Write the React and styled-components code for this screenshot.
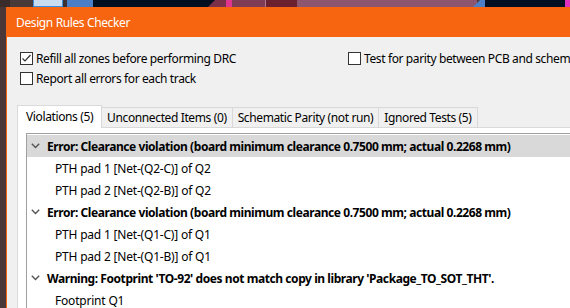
import React from "react";
import styled, { createGlobalStyle } from "styled-components";

const Global = createGlobalStyle`
  html, body { margin: 0; padding: 0; width: 570px; height: 308px; overflow: hidden; background: #4a3737; }
  * { box-sizing: border-box; }
`;

const FONT = `"Noto Sans", "Open Sans", sans-serif`;

const Screen = styled.div`
  width: 570px;
  height: 308px;
  display: flex;
  flex-direction: column;
  overflow: hidden;
  font-family: ${FONT};
  letter-spacing: -0.38px;
`;

const Strip = styled.svg`
  display: block;
  flex: none;
`;

const Lower = styled.div`
  flex: 1;
  display: flex;
  min-height: 0;
`;

const Backdrop = styled.div`
  width: 6px;
  flex: none;
  background: #4a3737;
`;

const Dialog = styled.div`
  flex: 1;
  min-width: 0;
  display: flex;
  flex-direction: column;
  border-left: 1px solid #f76510;
  background: #f0f0f0;
  overflow: hidden;
`;

const TitleBar = styled.div`
  height: 30px;
  flex: none;
  background: #f76510;
  color: #fff;
  font-size: 12px;
  display: flex;
  align-items: center;
  padding-left: 9px;
  padding-top: 1px;
`;

const Body = styled.div`
  flex: 1;
  display: flex;
  flex-direction: column;
  padding: 15px 0 0 10px;
  min-height: 0;
`;

const Options = styled.div`
  display: grid;
  grid-template-columns: 328px auto;
  row-gap: 7px;
  white-space: nowrap;
  padding-left: 3px;
`;

const Check = styled.label`
  display: flex;
  align-items: center;
  gap: 3px;
  font-size: 12px;
  color: #000;
  height: 13px;
`;

const Box = styled.span`
  width: 13px;
  height: 13px;
  flex: none;
  border: 1px solid #333;
  background: #fff;
  display: flex;
  align-items: center;
  justify-content: center;
`;

const TabsRow = styled.div`
  margin-top: 19px;
  display: flex;
  align-items: flex-end;
  height: 23px;
  position: relative;
  z-index: 1;
`;

const Tab = styled.div`
  font-size: 12px;
  white-space: nowrap;
  color: #000;
  border: 1px solid #d9d9d9;
  border-bottom: none;
  margin-left: ${(p) => (p.$first ? 0 : "-1px")};
  padding: 0 ${(p) => (p.$active ? "8px" : "5px")};
  height: ${(p) => (p.$active ? "23px" : "20px")};
  background: ${(p) => (p.$active ? "#fff" : "#f0f0f0")};
  display: flex;
  align-items: center;
  position: relative;
  z-index: ${(p) => (p.$active ? 2 : 1)};
  margin-bottom: ${(p) => (p.$active ? "-1px" : "0")};
  padding-bottom: ${(p) => (p.$active ? "2px" : "0")};
`;

const Panel = styled.div`
  flex: 1;
  background: #fff;
  border-top: 1px solid #d9d9d9;
  border-left: 1px solid #d9d9d9;
  padding: 5px 0 0 8px;
  min-height: 0;
  display: flex;
`;

const Tree = styled.div`
  flex: 1;
  border-top: 1px solid #a0a0a0;
  border-left: 1px solid #a0a0a0;
  padding-top: 1px;
  min-height: 0;
`;

const Row = styled.div`
  height: 22px;
  display: flex;
  align-items: center;
  white-space: nowrap;
  font-size: 12px;
  color: #000;
  font-weight: ${(p) => (p.$header ? 700 : 400)};
  padding-left: ${(p) => (p.$header ? "4px" : "28px")};
  background: ${(p) => (p.$selected ? "#d9d9d9" : "transparent")};
  letter-spacing: ${(p) => (p.$header ? "-0.43px" : "-0.2px")};
`;

const Chevron = styled.svg`
  flex: none;
  margin-right: 7px;
`;

const Stripe = () => (
  <Strip width="570" height="7" viewBox="0 0 570 7">
    <rect x="0" y="0" width="10" height="7" fill="#3b2c2c" />
    <rect x="10" y="0" width="23" height="7" fill="#4a3939" />
    <rect x="33" y="0" width="30" height="7" fill="#c9dbef" />
    <rect x="33.5" y="-1" width="29" height="7.5" fill="none" stroke="#3a8ee0" />
    <rect x="63" y="0" width="4" height="7" fill="#3e3030" />
    <rect x="67" y="0" width="26" height="7" fill="#4a7fc8" />
    <rect x="93" y="0" width="122" height="7" fill="#000f20" />
    <polygon points="208,7 215,0 226,0 226,7" fill="#7a3048" />
    <rect x="226" y="0" width="6" height="7" fill="#e0358e" />
    <rect x="232" y="0" width="33" height="7" fill="#7f3d55" />
    <rect x="265" y="0" width="1" height="7" fill="#b07890" />
    <rect x="266" y="0" width="31" height="7" fill="#6b2030" />
    <rect x="297" y="0" width="180" height="7" fill="#8c5570" />
    <polygon points="473,7 480,0 485,0 485,7" fill="#4a7fc8" />
    <rect x="485" y="0" width="80" height="7" fill="#000f22" />
    <rect x="565" y="0" width="5" height="7" fill="#e030c0" />
  </Strip>
);

const CheckBox = ({ checked, children }) => (
  <Check>
    <Box>
      {checked && (
        <svg width="11" height="11" viewBox="0 0 11 11">
          <polyline points="1.5,5.5 4,8 9.5,2" fill="none" stroke="#333" strokeWidth="1.2" />
        </svg>
      )}
    </Box>
    {children}
  </Check>
);

const Down = () => (
  <Chevron width="9" height="6" viewBox="0 0 9 6">
    <polyline points="0.8,0.8 4.5,4.5 8.2,0.8" fill="none" stroke="#555" strokeWidth="1.4" />
  </Chevron>
);

const rows = [
  { h: true, sel: true, t: "Error: Clearance violation (board minimum clearance 0.7500 mm; actual 0.2268 mm)" },
  { t: "PTH pad 1 [Net-(Q2-C)] of Q2" },
  { t: "PTH pad 2 [Net-(Q2-B)] of Q2" },
  { h: true, t: "Error: Clearance violation (board minimum clearance 0.7500 mm; actual 0.2268 mm)" },
  { t: "PTH pad 1 [Net-(Q1-C)] of Q1" },
  { t: "PTH pad 2 [Net-(Q1-B)] of Q1" },
  { h: true, t: "Warning: Footprint 'TO-92' does not match copy in library 'Package_TO_SOT_THT'." },
  { t: "Footprint Q1" },
];

export default function App() {
  return (
    <>
      <Global />
      <Screen>
        <Stripe />
        <Lower>
          <Backdrop />
          <Dialog>
            <TitleBar>Design Rules Checker</TitleBar>
            <Body>
              <Options>
                <CheckBox checked>Refill all zones before performing DRC</CheckBox>
                <CheckBox>Test for parity between PCB and schematic</CheckBox>
                <CheckBox>Report all errors for each track</CheckBox>
              </Options>
              <TabsRow>
                <Tab $active $first>Violations (5)</Tab>
                <Tab>Unconnected Items (0)</Tab>
                <Tab>Schematic Parity (not run)</Tab>
                <Tab>Ignored Tests (5)</Tab>
              </TabsRow>
              <Panel>
                <Tree>
                  {rows.map((r, i) => (
                    <Row key={i} $header={r.h} $selected={r.sel}>
                      {r.h && <Down />}
                      {r.t}
                    </Row>
                  ))}
                </Tree>
              </Panel>
            </Body>
          </Dialog>
        </Lower>
      </Screen>
    </>
  );
}
